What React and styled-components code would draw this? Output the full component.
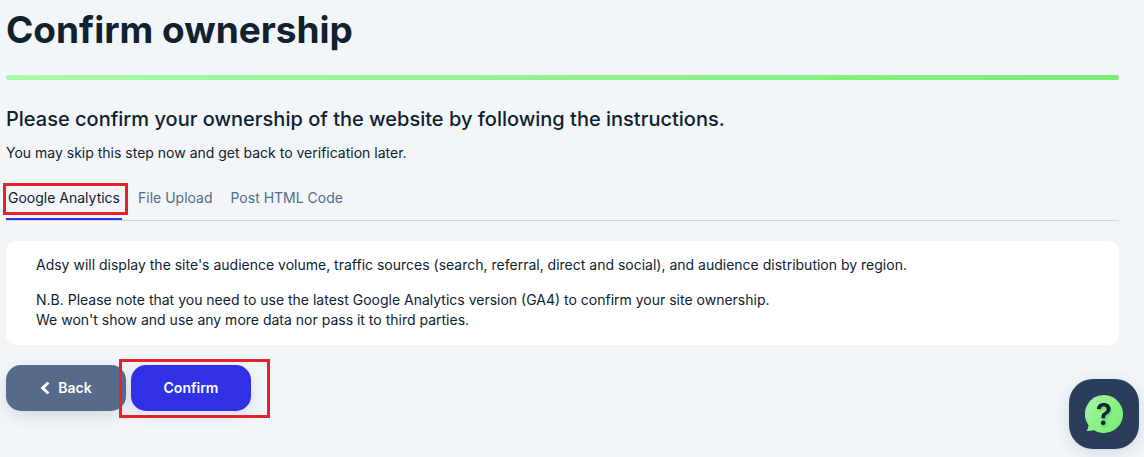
import React, { useState } from "react";
import styled, { createGlobalStyle } from "styled-components";

const TABS = ["Google Analytics", "File Upload", "Post HTML Code"];

export default function App() {
  const [activeTab, setActiveTab] = useState(TABS[0]);

  return (
    <>
      <GlobalStyle />
      <Page>
        <Title>Confirm ownership</Title>
        <Divider />
        <Subtitle>
          Please confirm your ownership of the website by following the
          instructions.
        </Subtitle>
        <Hint>You may skip this step now and get back to verification later.</Hint>
        <Tabs role="tablist">
          {TABS.map((tab, index) => (
            <Tab
              key={tab}
              type="button"
              role="tab"
              aria-selected={tab === activeTab}
              $active={tab === activeTab}
              onClick={() => setActiveTab(tab)}
            >
              {tab}
              {index === 0 && <TabHighlight />}
            </Tab>
          ))}
        </Tabs>
        <Panel role="tabpanel">
          <p>
            Adsy will display the site's audience volume, traffic sources
            (search, referral, direct and social), and audience distribution by
            region.
          </p>
          <p>
            N.B. Please note that you need to use the latest Google Analytics
            version (GA4) to confirm your site ownership.
            <br />
            We won't show and use any more data nor pass it to third parties.
          </p>
        </Panel>
        <Actions>
          <Button type="button" $color="#556b89" $shadow="rgba(85, 107, 137, 0.2)">
            <ChevronIcon />
            Back
          </Button>
          <Button type="button" $color="#3030e4" $shadow="rgba(48, 48, 228, 0.12)">
            Confirm
            <ButtonHighlight />
          </Button>
        </Actions>
      </Page>
      <HelpButton type="button">
        <BubbleIcon />
        <span>?</span>
      </HelpButton>
    </>
  );
}

const ChevronIcon = () => (
  <svg width="10" height="14" viewBox="0 0 10 14" fill="none" aria-hidden="true">
    <path d="M8.400 1.500L2.700 7l5.700 5.500" stroke="#ffffff" strokeWidth="3" />
  </svg>
);

const BubbleIcon = () => (
  <svg width="38" height="38" viewBox="0 0 38 38" aria-hidden="true">
    <defs>
      <linearGradient id="bubble" x1="0" y1="0" x2="1" y2="1">
        <stop offset="0" stopColor="#a5f7a5" />
        <stop offset="1" stopColor="#73ec6b" />
      </linearGradient>
    </defs>
    <path
      d="M19 0a19 19 0 1 1-10.4 34.9C6.700 35.500 4.500 36 1.600 36c1.500-2.500 2-4.800 1.800-6.100A19 19 0 0 1 19 0z"
      fill="url(#bubble)"
    />
  </svg>
);

const GlobalStyle = createGlobalStyle`
  * {
    box-sizing: border-box;
  }

  body {
    margin: 0;
    background: #f2f6f9;
    color: #10222f;
    font-family: Inter, "Liberation Sans", sans-serif;
    font-size: 14px;
    line-height: 20px;
  }

  button {
    font: inherit;
    border: none;
    cursor: pointer;
  }
`;

const Page = styled.main`
  padding: 6px 25px 40px 6px;
`;

const Title = styled.h1`
  margin: 0;
  font-size: 37px;
  line-height: 48px;
  font-weight: 700;
`;

const Divider = styled.div`
  height: 5px;
  margin-top: 21px;
  border-radius: 3px;
  background: linear-gradient(90deg, #a9f8a9, #7aee74);
`;

const Subtitle = styled.h2`
  margin: 25px 0 0;
  font-size: 20px;
  line-height: 28px;
  font-weight: 500;
`;

const Hint = styled.p`
  margin: 10px 0 0;
`;

const Tabs = styled.div`
  display: flex;
  gap: 14px;
  margin-top: 20px;
  border-bottom: 1px solid #ccd5e3;
`;

const Tab = styled.button`
  position: relative;
  padding: 5px 2px 10px;
  background: none;
  border-bottom: 2px solid
    ${({ $active }) => ($active ? "#3030e4" : "transparent")};
  color: ${({ $active }) => ($active ? "#10222f" : "#556b89")};
`;

const Highlight = styled.span`
  position: absolute;
  border: 3px solid #e62129;
  pointer-events: none;
`;

const TabHighlight = styled(Highlight)`
  inset: 0 -6px 3px -3px;
`;

const ButtonHighlight = styled(Highlight)`
  inset: -6px -19px -7px -12px;
`;

const Panel = styled.section`
  margin-top: 20px;
  padding: 14px 30px 15px;
  border-radius: 10px;
  background: #ffffff;

  p {
    margin: 0;
  }

  p + p {
    margin-top: 15px;
  }
`;

const Actions = styled.div`
  display: flex;
  gap: 5px;
  margin-top: 20px;
`;

const Button = styled.button`
  position: relative;
  display: flex;
  justify-content: center;
  align-items: center;
  gap: 8px;
  width: 120px;
  height: 46px;
  border-radius: 15px;
  background: ${({ $color }) => $color};
  box-shadow: 0 5px 15px ${({ $shadow }) => $shadow};
  color: #ffffff;
  font-weight: 600;
`;

const HelpButton = styled.button`
  position: fixed;
  right: 5px;
  bottom: 8px;
  display: grid;
  place-items: center;
  width: 70px;
  height: 70px;
  border-radius: 24px;
  background: #2a3d5a;
  box-shadow: 0 4px 16px rgba(42, 61, 90, 0.15);
  color: #10222f;

  svg,
  span {
    grid-area: 1 / 1;
  }

  span {
    font-size: 30px;
    line-height: 28px;
    font-weight: 600;
    text-shadow: 1px 2px 2px rgba(16, 34, 47, 0.2);
  }
`;
